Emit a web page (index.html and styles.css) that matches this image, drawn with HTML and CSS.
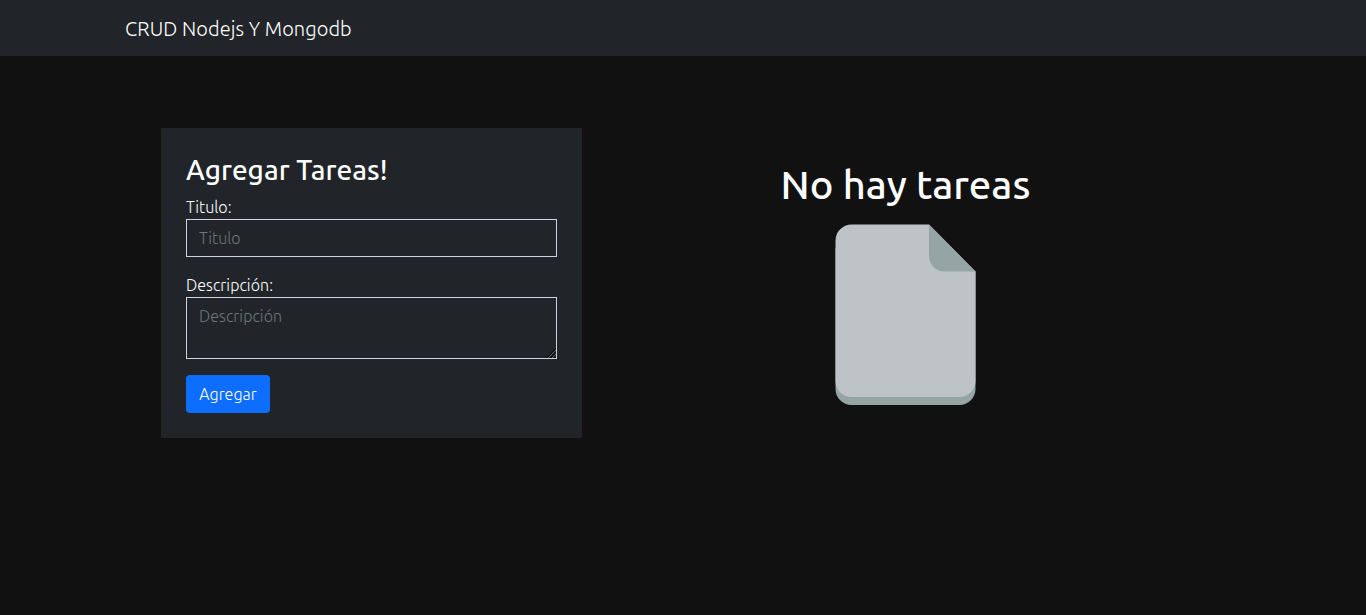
FILE: index.html
```html
<!DOCTYPE html>
<html lang="es">
<head>
<meta charset="utf-8">
<title>CRUD Nodejs Y Mongodb</title>
<link rel="stylesheet" href="styles.css">
</head>
<body>
<nav class="navbar"><div class="container"><a class="brand">CRUD Nodejs Y Mongodb</a></div></nav>
<main class="content">
  <form class="card">
    <h3 class="card-title">Agregar Tareas!</h3>
    <label class="label" for="title">Titulo:</label>
    <input class="control" id="title" type="text" placeholder="Titulo">
    <label class="label" for="description">Descripción:</label>
    <textarea class="control" id="description" rows="2" placeholder="Descripción"></textarea>
    <button class="button" type="button">Agregar</button>
  </form>
  <section class="empty">
    <h1 class="empty-title">No hay tareas</h1>
    <svg class="file" viewBox="0 0 141 181" width="141" height="181">
      <path fill="#95a5a5" d="M.5 24V165a16 16 0 0 0 16 16H124.500a16 16 0 0 0 16-16V47H24z"/>
      <path fill="#bdc3c7" d="M16.500 .5A16 16 0 0 0 .5 16.500V157a16 16 0 0 0 16 16H124.500a16 16 0 0 0 16-16V47.500L94 .5z"/>
      <path fill="#95a5a5" d="M94 .5V32a15.500 15.500 0 0 0 15.500 15.500H140.500z"/>
    </svg>
  </section>
</main>
</body>
</html>
```
FILE: styles.css
```css
* { box-sizing: border-box; }
body {
  margin: 0;
  background: #111;
  color: #fff;
  font: 360 16px/24px Ubuntu, "Open Sans", "Noto Sans", sans-serif;
  letter-spacing: .05px;
}
.navbar { height: 56px; padding: 14px 0 12px; background: #212529; }
.container { width: 1140px; margin: 0 auto; padding: 0 12px; }
.brand { display: block; font-size: 20px; line-height: 30px; letter-spacing: .09px; }
.content {
  display: grid;
  grid-template-columns: 421px 599px;
  column-gap: 24px;
  align-items: start;
  width: 1044px;
  margin: 72px auto 0;
}
.card {
  display: flex;
  flex-direction: column;
  align-items: flex-start;
  height: 310px;
  background: #212529;
  border: 1px solid #1f2427;
  padding: 24px;
}
.card-title { margin: 0 0 8px; font-size: 28px; line-height: 34px; font-weight: 500; letter-spacing: 0; }
.label { white-space: nowrap; }
.control {
  display: block;
  width: 100%;
  margin: 0 0 16px;
  padding: 6px 12px;
  border: 1px solid #ced4da;
  border-radius: 0;
  background: transparent;
  color: #fff;
  font: inherit;
  letter-spacing: inherit;
}
input.control { height: 38px; }
textarea.control { height: 62px; resize: vertical; }
textarea.control::-webkit-resizer {
  background:
    linear-gradient(135deg, #212529 50%, transparent 50%) right bottom / 11px 11px no-repeat,
    repeating-linear-gradient(135deg, #101214 0 1px, #60656a 1px 2px, #212529 2px 2.8px) right bottom / 11px 11px no-repeat;
}
.control::placeholder { color: #6c757d; opacity: 1; }
.button {
  height: 38px;
  width: 84px;
  padding: 0;
  border: 0;
  border-radius: 4px;
  background: #0d6efd;
  color: #fff;
  font: inherit;
  letter-spacing: inherit;
}
.empty { display: flex; flex-direction: column; align-items: center; padding-top: 33px; }
.empty-title { margin: 0 0 15px; font-size: 40px; line-height: 48px; font-weight: 500; letter-spacing: 0; }
.file { display: block; }
```
